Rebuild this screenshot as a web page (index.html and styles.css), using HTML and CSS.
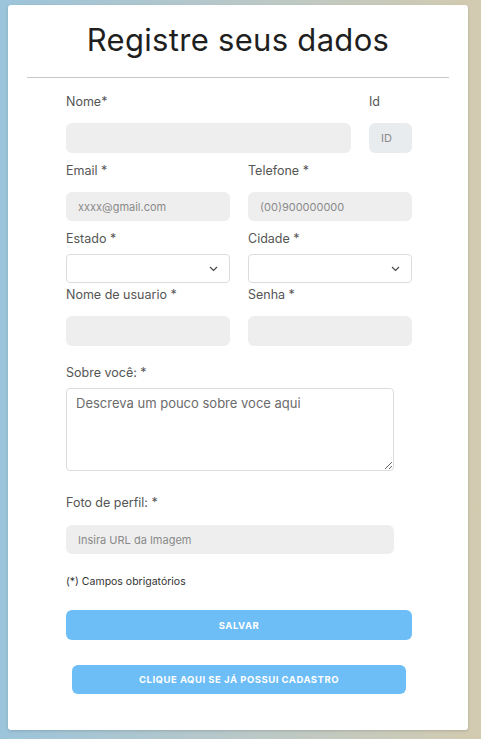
FILE: index.html
```html
<!DOCTYPE html>
<html lang="pt-BR">
<head>
<meta charset="utf-8">
<title>Registre seus dados</title>
<link rel="stylesheet" href="styles.css">
</head>
<body>
<div class="card">
  <h1 class="title">Registre seus dados</h1>
  <hr class="divider">
  <form class="form">
    <div class="row row-first">
      <div class="field grow">
        <label class="label">Nome*</label>
        <input class="input" type="text">
      </div>
      <div class="field id-field">
        <label class="label">Id</label>
        <input class="input input-id" type="text" placeholder="ID">
      </div>
    </div>
    <div class="row row-gap">
      <div class="field half">
        <label class="label">Email *</label>
        <input class="input input-short" type="text" placeholder="xxxx@gmail.com">
      </div>
      <div class="field half">
        <label class="label">Telefone *</label>
        <input class="input input-short" type="text" placeholder="(00)900000000">
      </div>
    </div>
    <div class="row row-gap">
      <div class="field half">
        <label class="label label-select">Estado *</label>
        <div class="select-wrap">
          <select class="select"><option></option></select>
          <svg class="chevron" width="9" height="6" viewBox="0 0 9 6"><path d="M1 1l3.5 3.5L8 1" fill="none" stroke="#444" stroke-width="1.1"/></svg>
        </div>
      </div>
      <div class="field half">
        <label class="label label-select">Cidade *</label>
        <div class="select-wrap">
          <select class="select"><option></option></select>
          <svg class="chevron" width="9" height="6" viewBox="0 0 9 6"><path d="M1 1l3.5 3.5L8 1" fill="none" stroke="#444" stroke-width="1.1"/></svg>
        </div>
      </div>
    </div>
    <div class="row row-tight">
      <div class="field half">
        <label class="label">Nome de usuario *</label>
        <input class="input" type="text">
      </div>
      <div class="field half">
        <label class="label">Senha *</label>
        <input class="input" type="password">
      </div>
    </div>
    <div class="field block about">
      <label class="label label-select">Sobre você: *</label>
      <textarea class="textarea" placeholder="Descreva um pouco sobre voce aqui"></textarea>
    </div>
    <div class="field block photo">
      <label class="label label-photo">Foto de perfil: *</label>
      <input class="input input-short" type="text" placeholder="Insira URL da Imagem">
    </div>
    <p class="note">(*) Campos obrigatórios</p>
    <button type="button" class="btn btn-save">SALVAR</button>
    <button type="button" class="btn btn-login">CLIQUE AQUI SE JÁ POSSUI CADASTRO</button>
  </form>
</div>
</body>
</html>
```
FILE: styles.css
```css
* { box-sizing: border-box; }
html, body { height: 100%; }
body {
  margin: 0;
  padding: 5px 13px 9px 8px;
  background: linear-gradient(90deg, #9cc4da 0%, #b9c8c8 50%, #d3cbb0 100%);
  font-family: Inter, "Open Sans", sans-serif;
  color: #444;
}
.card {
  background: #fff;
  border-radius: 3px;
  box-shadow: 0 1px 3px rgba(0,0,0,0.15);
  height: 725px;
  padding: 20px 19px 0;
}
.title {
  margin: 0;
  text-align: center;
  font-weight: 400;
  font-size: 31px;
  line-height: 30px;
  color: #1f1f1f;
  letter-spacing: 0.3px;
}
.divider {
  border: 0;
  border-top: 1px solid #c8c8c8;
  margin: 22px 0 0;
}
.form {
  width: 346px;
  margin: 0 auto 0 39px;
  display: flex;
  flex-direction: column;
}
.row { display: flex; gap: 18px; }
.row-first { margin-top: 16px; }
.row-gap { margin-top: 10px; }
.row-tight { margin-top: 4px; }
.field { display: flex; flex-direction: column; }
.grow { flex: 1; }
.id-field { width: 43px; }
.half { flex: 1; }
.label {
  font-size: 12.5px;
  line-height: 16px;
  font-weight: 400;
  color: #555;
  margin-bottom: 13px;
}
.label-select { margin-bottom: 7px; }
.input {
  height: 30px;
  border: 0;
  border-radius: 6px;
  background: #eeeeee;
  padding: 0 12px;
  font-family: inherit;
  font-size: 11px;
  color: #333;
  outline: none;
  width: 100%;
}
.input-short { height: 29px; }
.input::placeholder { color: #8a8a8a; }
.input-id { background: #e9ecef; padding: 0 12px; }
.select-wrap { position: relative; }
.select {
  appearance: none;
  -webkit-appearance: none;
  display: block;
  width: 100%;
  height: 29px;
  border: 1px solid #dcdcdc;
  border-radius: 4px;
  background: #fff;
  font-family: inherit;
}
.chevron { position: absolute; right: 12px; top: 12px; }
.block { width: 328px; }
.about { margin-top: 19px; }
.textarea {
  display: block;
  height: 83px;
  border: 1px solid #dcdcdc;
  border-radius: 4px;
  padding: 5px 9px;
  font-family: inherit;
  font-size: 13px;
  line-height: 18px;
  color: #333;
  resize: both;
}
.textarea::placeholder { color: #6b6b6b; }
.photo { margin-top: 24px; }
.label-photo { margin-bottom: 14px; }
.note {
  margin: 21px 0 0;
  font-size: 10.5px;
  line-height: 14px;
  color: #333;
}
.btn {
  height: 30px;
  border: 0;
  border-radius: 6px;
  background: #6dbdf6;
  color: #fff;
  font-family: inherit;
  font-weight: 700;
  font-size: 9.5px;
  letter-spacing: 0.5px;
}
.btn-save { margin-top: 21px; width: 346px; }
.btn-login { margin: 25px auto 0; width: 334px; height: 29px; }
```
